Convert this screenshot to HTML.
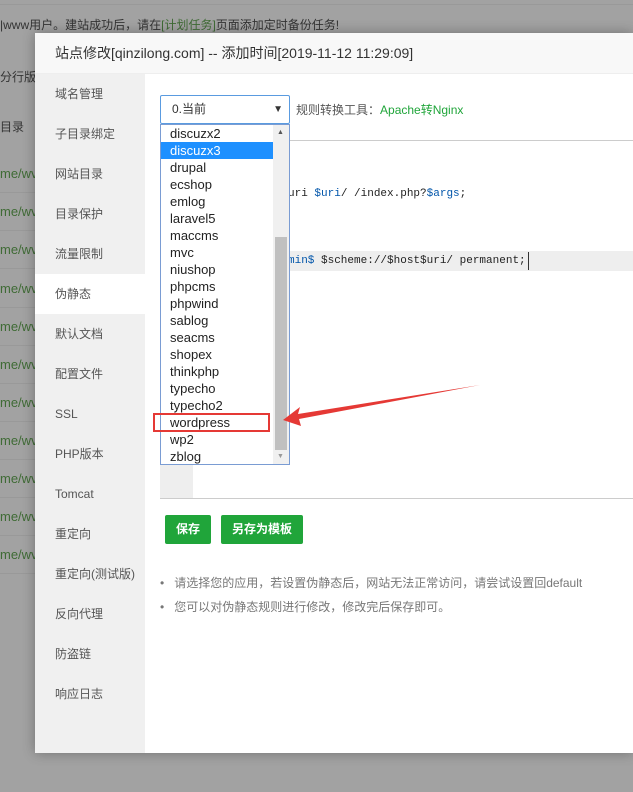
<!DOCTYPE html>
<html><head><meta charset="utf-8"><style>
*{margin:0;padding:0;box-sizing:border-box}
body{width:633px;height:792px;overflow:hidden;background:#a2a2a2;font-family:"Liberation Sans","Noto Sans CJK SC",sans-serif;font-size:12px;color:#333;position:relative}
.bg{position:absolute;left:0;top:0;width:633px;height:792px}
.row{position:absolute;left:0;width:60px;height:38px;border-bottom:1px solid #999;color:#3f6b35;font-size:13px;line-height:38px}
.modal{position:absolute;left:35px;top:33px;width:598px;height:720px;background:#fff;box-shadow:0 0 12px rgba(0,0,0,.3)}
.title{height:41px;background:#f8f8f8;border-bottom:1px solid #eee;line-height:40px;padding-left:20px;font-size:14px;color:#333}
.menu{position:absolute;left:0;top:41px;width:110px;height:679px;background:#f0f0f0}
.menu div{height:40px;line-height:40px;padding-left:20px;font-size:12px;color:#555}
.menu .on{background:#fff}
.abs{position:absolute}
.sel{left:160px;top:95px;width:130px;height:29px;border:1px solid #5a9be0;border-radius:2px;line-height:27px;padding-left:11px;font-size:12px;background:#fff}
.list{left:160px;top:124px;width:130px;height:341px;border:1px solid #7a9cd3;background:#fff;font-size:13px;color:#222;overflow:hidden}
.list .it{height:17px;line-height:17px;padding-left:9px;width:112px}
.list .hl{background:#1e90ff;color:#fff}
.sb{position:absolute;right:0;top:0;width:16px;height:339px;background:#f0f0f0}
.code{font-family:"Liberation Mono",monospace;font-size:11px;color:#222}
.btn{top:515px;height:29px;background:#20a53a;color:#fff;border-radius:2px;line-height:29px;text-align:center;font-weight:bold;font-size:12px}
.note{left:160px;font-size:12px;color:#777}
</style></head><body>
<div class="bg">
<div class="abs" style="left:0;top:16px;font-size:12px;color:#333">|www用户。建站成功后，请在<span style="color:#3f6b35">[计划任务]</span>页面添加定时备份任务!</div>
<div class="abs" style="left:0;top:4px;width:633px;border-top:1px solid #999"></div>
<div class="abs" style="left:0;top:68px;font-size:12px">分行版本</div>
<div class="abs" style="left:0;top:118px;font-size:12px">目录</div>
<div class="row" style="top:155px">me/wv</div>
<div class="row" style="top:193px">me/wv</div>
<div class="row" style="top:231px">me/wv</div>
<div class="row" style="top:270px">me/wv</div>
<div class="row" style="top:308px">me/wv</div>
<div class="row" style="top:346px">me/wv</div>
<div class="row" style="top:384px">me/wv</div>
<div class="row" style="top:422px">me/wv</div>
<div class="row" style="top:460px">me/wv</div>
<div class="row" style="top:498px">me/wv</div>
<div class="row" style="top:536px">me/wv</div>
</div>
<div class="modal">
<div class="title">站点修改[qinzilong.com] -- 添加时间[2019-11-12 11:29:09]</div>
<div class="menu">
<div>域名管理</div><div>子目录绑定</div><div>网站目录</div><div>目录保护</div><div>流量限制</div><div class="on">伪静态</div><div>默认文档</div><div>配置文件</div><div>SSL</div><div>PHP版本</div><div>Tomcat</div><div>重定向</div><div>重定向(测试版)</div><div>反向代理</div><div>防盗链</div><div>响应日志</div>
</div>
</div>
<div class="abs" style="left:160px;top:140px;width:473px;height:359px;border-top:1px solid #ccc;border-bottom:1px solid #ccc"></div>
<div class="abs" style="left:160px;top:141px;width:33px;height:357px;background:#eee"></div>
<div class="abs" style="left:193px;top:251px;width:440px;height:20px;background:#eee"></div>
<div class="abs code" style="left:288px;top:188px">uri <span style="color:#05a">$uri</span>/ /index.php?<span style="color:#05a">$args</span>;</div>
<div class="abs code" style="left:288px;top:255px"><span style="color:#05a">min$</span> $scheme://$host$uri/ permanent;</div>
<div class="abs" style="left:528px;top:252px;width:1px;height:18px;background:#333"></div>
<div class="abs sel">0.当前<span style="position:absolute;right:6px;top:0;font-size:10px">▼</span></div>
<div class="abs" style="left:296px;top:101px;font-size:12px;color:#555">规则转换工具：<span style="color:#20a53a">Apache转Nginx</span></div>
<div class="abs list">
<div class="it">discuzx2</div><div class="it hl">discuzx3</div><div class="it">drupal</div><div class="it">ecshop</div><div class="it">emlog</div><div class="it">laravel5</div><div class="it">maccms</div><div class="it">mvc</div><div class="it">niushop</div><div class="it">phpcms</div><div class="it">phpwind</div><div class="it">sablog</div><div class="it">seacms</div><div class="it">shopex</div><div class="it">thinkphp</div><div class="it">typecho</div><div class="it">typecho2</div><div class="it">wordpress</div><div class="it">wp2</div><div class="it">zblog</div>
<div class="sb"><div style="position:absolute;left:2px;top:112px;width:12px;height:213px;background:#c0c0c0"></div>
<div style="position:absolute;left:4px;top:4px;font-size:7px;color:#555">▲</div>
<div style="position:absolute;left:4px;top:328px;font-size:7px;color:#999">▼</div></div>
</div>
<div class="abs" style="left:153px;top:413px;width:117px;height:19px;border:2px solid #e53935"></div>
<svg class="abs" style="left:0;top:0" width="633" height="792"><polygon points="283,420 300,407 298,414 480,385 299,419 301,426" fill="#e53935"/></svg>
<div class="abs btn" style="left:165px;width:46px">保存</div>
<div class="abs btn" style="left:221px;width:82px">另存为模板</div>
<div class="abs note" style="top:574px">•&nbsp;&nbsp;&nbsp;请选择您的应用，若设置伪静态后，网站无法正常访问，请尝试设置回default</div>
<div class="abs note" style="top:598px">•&nbsp;&nbsp;&nbsp;您可以对伪静态规则进行修改，修改完后保存即可。</div>
</body></html>
